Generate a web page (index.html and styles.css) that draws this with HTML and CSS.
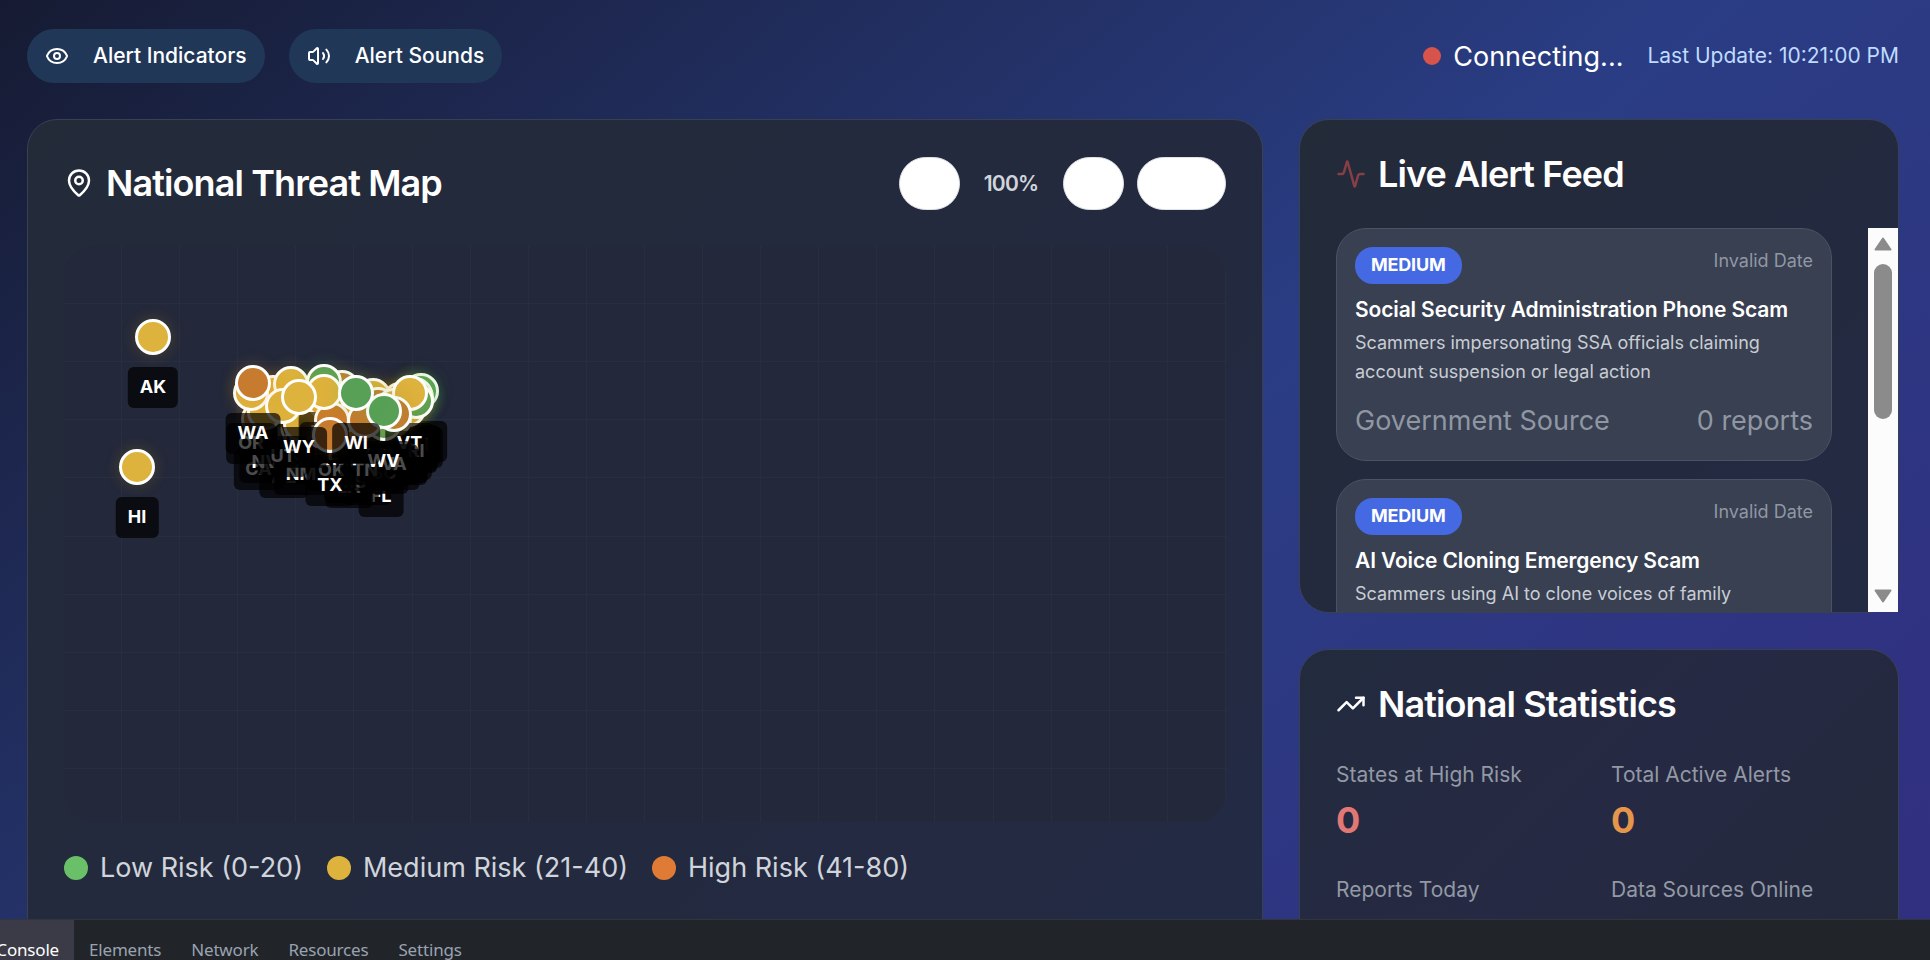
FILE: index.html
```html
<!DOCTYPE html>
<html lang="en">
<head>
<meta charset="utf-8">
<title>National Threat Map</title>
<link rel="stylesheet" href="styles.css">
</head>
<body>
<div class="page">
  <header class="topbar">
    <div class="toggles">
      <button class="toggle"><svg class="icon" viewBox="0 0 24 24"><path d="M2.062 12.348a1 1 0 0 1 0-.696 10.75 10.75 0 0 1 19.876 0 1 1 0 0 1 0 .696 10.75 10.75 0 0 1-19.876 0"/><circle cx="12" cy="12" r="3"/></svg><span>Alert Indicators</span></button>
      <button class="toggle"><svg class="icon" viewBox="0 0 24 24"><path d="M11 4.702a.705.705 0 0 0-1.203-.498L6.413 7.587A1.4 1.4 0 0 1 5.416 8H3a1 1 0 0 0-1 1v6a1 1 0 0 0 1 1h2.416a1.4 1.4 0 0 1 .997.413l3.383 3.384A.705.705 0 0 0 11 19.298z"/><path d="M16 9a5 5 0 0 1 0 6"/><path d="M19.364 18.364a9 9 0 0 0 0-12.728"/></svg><span>Alert Sounds</span></button>
    </div>
    <div class="status">
      <span class="status-dot"></span>
      <span class="status-text">Connecting...</span>
      <span class="status-time">Last Update: 10:21:00 PM</span>
    </div>
  </header>
  <main class="layout">
    <section class="panel map-panel">
      <div class="map-head">
        <h2 class="title"><svg class="icon icon-lg" viewBox="0 0 24 24"><path d="M20 10c0 4.993-5.539 10.193-7.399 11.799a1 1 0 0 1-1.202 0C9.539 20.193 4 14.993 4 10a8 8 0 0 1 16 0"/><circle cx="12" cy="10" r="3"/></svg><span>National Threat Map</span></h2>
        <div class="zoom">
          <button class="zoom-btn"></button>
          <span class="zoom-value">100%</span>
          <button class="zoom-btn"></button>
          <button class="zoom-btn zoom-reset"></button>
        </div>
      </div>
      <div class="map" id="map"></div>
      <div class="legend">
        <span class="legend-item"><i class="swatch low"></i>Low Risk (0-20)</span>
        <span class="legend-item"><i class="swatch medium"></i>Medium Risk (21-40)</span>
        <span class="legend-item"><i class="swatch high"></i>High Risk (41-80)</span>
      </div>
    </section>
    <div class="side">
      <section class="panel feed">
        <h2 class="title"><svg class="icon icon-lg pulse" viewBox="0 0 24 24"><path d="M22 12h-2.48a2 2 0 0 0-1.93 1.46l-2.35 8.36a.25.25 0 0 1-.48 0L9.24 2.18a.25.25 0 0 0-.48 0l-2.35 8.36A2 2 0 0 1 4.49 12H2"/></svg><span>Live Alert Feed</span></h2>
        <div class="feed-body">
          <div class="feed-list">
            <article class="alert">
              <div class="alert-top"><span class="badge">MEDIUM</span><span class="date">Invalid Date</span></div>
              <h3 class="alert-title">Social Security Administration Phone Scam</h3>
              <p class="alert-desc">Scammers impersonating SSA officials claiming account suspension or legal action</p>
              <div class="alert-foot"><span>Government Source</span><span>0 reports</span></div>
            </article>
            <article class="alert">
              <div class="alert-top"><span class="badge">MEDIUM</span><span class="date">Invalid Date</span></div>
              <h3 class="alert-title">AI Voice Cloning Emergency Scam</h3>
              <p class="alert-desc">Scammers using AI to clone voices of family</p>
            </article>
          </div>
          <div class="scrollbar">
            <svg class="arrow" viewBox="0 0 18 14"><path d="M9 1.5 16.5 12.5H1.5z"/></svg>
            <div class="thumb"></div>
            <svg class="arrow arrow-down" viewBox="0 0 18 14"><path d="M9 12.5 1.5 1.5H16.5z"/></svg>
          </div>
        </div>
      </section>
      <section class="panel stats">
        <h2 class="title"><svg class="icon icon-lg" viewBox="0 0 24 24"><path d="M22 7l-8.5 8.5-5-5L2 17"/><path d="M16 7h6v6"/></svg><span>National Statistics</span></h2>
        <div class="stat-grid">
          <div><div class="stat-label">States at High Risk</div><div class="stat-value red">0</div></div>
          <div><div class="stat-label">Total Active Alerts</div><div class="stat-value orange">0</div></div>
          <div><div class="stat-label">Reports Today</div></div>
          <div><div class="stat-label">Data Sources Online</div></div>
        </div>
      </section>
    </div>
  </main>
</div>
<nav class="devbar">
  <span class="tab active">Console</span><span class="tab">Elements</span><span class="tab">Network</span><span class="tab">Resources</span><span class="tab">Settings</span>
</nav>
<script src="map.js"></script>
</body>
</html>
```
FILE: map.js
```javascript
// code, x, y inside the map, risk level
const states = [
  ["AL", 303, 188, "medium"], ["AK", 89, 91, "medium"], ["AZ", 220, 181, "medium"],
  ["AR", 285, 186, "high"], ["CA", 194.5, 173, "high"], ["CO", 236, 167, "medium"],
  ["CT", 349, 156, "medium"], ["DE", 340, 166, "medium"], ["FL", 317, 199.5, "low"],
  ["GA", 312, 176, "medium"], ["HI", 73, 220.5, "medium"], ["ID", 208.5, 147, "medium"],
  ["IL", 294, 164, "medium"], ["IN", 303, 163, "high"], ["IA", 283, 156, "medium"],
  ["KS", 266, 167, "medium"], ["KY", 307, 170, "medium"], ["LA", 285, 191, "high"],
  ["ME", 357, 145, "low"], ["MD", 336, 168, "medium"], ["MA", 352, 151, "low"],
  ["MI", 308.5, 150, "medium"], ["MN", 277.5, 142, "high"], ["MS", 288, 186, "high"],
  ["MO", 284, 168, "medium"], ["MT", 227, 137.5, "medium"], ["NE", 262, 158, "medium"],
  ["NV", 201, 166, "medium"], ["NH", 351, 149, "low"], ["NJ", 344, 163, "medium"],
  ["NM", 237, 177.5, "medium"], ["NY", 336, 154, "medium"], ["NC", 330, 173, "medium"],
  ["ND", 259.5, 136, "low"], ["OH", 314, 159, "high"], ["OK", 267.5, 174, "high"],
  ["OR", 187, 147, "medium"], ["PA", 330, 160, "medium"], ["RI", 352, 154.5, "low"],
  ["SC", 320, 176.5, "low"], ["SD", 260, 146, "medium"], ["TN", 301, 174, "high"],
  ["TX", 266, 188.7, "high"], ["UT", 219, 160, "medium"], ["VT", 345.5, 146.5, "medium"],
  ["VA", 330, 167.5, "high"], ["WA", 189, 137, "high"], ["WV", 319.7, 165, "low"],
  ["WI", 292, 147, "low"], ["WY", 235, 150.7, "medium"]
];
const map = document.getElementById("map");
for (const [code, x, y, level] of states) {
  const marker = document.createElement("div");
  marker.className = "marker";
  marker.style.left = x + "px";
  marker.style.top = y + "px";
  marker.innerHTML = `<div class="pin ${level}"></div><div class="pin-label">${code}</div>`;
  map.appendChild(marker);
}
```
FILE: styles.css
```css
* { box-sizing: border-box; }
body {
  margin: 0;
  height: 960px;
  overflow: hidden;
  display: flex;
  flex-direction: column;
  font-family: Inter, "Liberation Sans", sans-serif;
  font-size: 27px;
  line-height: 36px;
  color: #fff;
  background: #212529;
}
h2, h3, p { margin: 0; }
button { border: 0; font: inherit; color: inherit; padding: 0; }
.page {
  height: 919px;
  flex: none;
  overflow: hidden;
  padding: 29px 31px 0 27px;
  background: linear-gradient(140deg, #161b32 0, #2a3d84 1080px, #312f80 1900px);
}
.topbar { display: flex; justify-content: space-between; height: 54px; align-items: center; }
.toggles { display: flex; gap: 24px; }
.toggle {
  height: 54px;
  border-radius: 27px;
  padding: 0 18px;
  display: flex;
  align-items: center;
  gap: 24px;
  font-size: 21px;
  font-weight: 500;
  background: #213757;
}
.icon {
  width: 24px;
  height: 24px;
  flex: none;
  fill: none;
  stroke: currentColor;
  stroke-width: 2;
  stroke-linecap: round;
  stroke-linejoin: round;
}
.icon-lg { width: 30px; height: 30px; }
.pulse { color: #863f46; }
.status { display: flex; align-items: center; }
.status-dot { width: 18px; height: 18px; border-radius: 50%; background: #d6544b; margin-right: 12px; }
.status-text { margin-right: 24px; padding-top: 2px; }
.status-time { font-size: 21px; color: #bfdbfe; }
.layout { display: grid; grid-template-columns: 1236px 600px; gap: 36px; margin-top: 36px; }
.panel { border: 1px solid #384152; border-radius: 30px; background: linear-gradient(135deg, #232a38, #232a44); }
.map-panel { height: 860px; padding: 36px; }
.map-head { display: flex; justify-content: space-between; align-items: center; height: 54px; padding-right: .5px; }
.title { display: flex; align-items: center; gap: 12px; font-size: 36px; line-height: 40px; font-weight: 600; letter-spacing: -0.9px; }
.zoom { display: flex; align-items: center; }
.zoom-btn { width: 61px; height: 53px; border-radius: 27px; background: #fff; border: 1px solid #dfe2e8; }
.zoom-value { width: 103px; padding-top: 2px; text-align: center; font-size: 21px; font-weight: 600; letter-spacing: -0.8px; color: #d1d5db; }
.zoom-reset { width: 89px; margin-left: 13px; }
.map {
  position: relative;
  height: 576px;
  margin-top: 36px;
  border-radius: 30px;
  overflow: hidden;
  background:
    repeating-linear-gradient(90deg, transparent 0 57.1px, rgba(55, 70, 90, .2) 57.1px 58.1px),
    repeating-linear-gradient(180deg, transparent 0 57.1px, rgba(55, 70, 90, .2) 57.1px 58.1px),
    #23283a;
}
.marker { position: absolute; width: 0; height: 0; }
.pin { position: absolute; left: -18px; top: -18px; width: 36px; height: 36px; border-radius: 50%; border: 3px solid #fff; }
.pin.low { background: #57a055; box-shadow: 0 0 15px rgba(87, 190, 85, .25); }
.pin.medium { background: #ddb23d; box-shadow: 0 0 15px rgba(234, 179, 8, .2); }
.pin.high { background: #c77b2e; box-shadow: 0 0 15px rgba(234, 140, 40, .25); }
.pin-label {
  position: absolute;
  top: 30px;
  left: 0;
  transform: translateX(-50%);
  height: 41px;
  padding: 0 12px;
  border-radius: 6px;
  font-size: 18px;
  line-height: 40px;
  font-weight: 700;
  background: rgba(0, 0, 0, .7);
}
.legend { display: flex; gap: 24px; margin-top: 28px; color: #d1d5db; }
.legend-item { display: flex; align-items: center; gap: 12px; }
.swatch { width: 24px; height: 24px; border-radius: 50%; }
.swatch.low { background: #6abf69; }
.swatch.medium { background: #ddb23d; }
.swatch.high { background: #e07b35; }
.side { display: flex; flex-direction: column; gap: 36px; }
.feed { height: 494px; padding-top: 34px; }
.feed .title, .stats .title { padding-left: 36px; }
.feed-body { display: flex; justify-content: space-between; height: 384px; margin-top: 34px; overflow: hidden; }
.feed-list { width: 496px; margin-left: 36px; display: flex; flex-direction: column; gap: 18px; overflow: hidden; }
.alert { flex: none; height: 233px; border: 1px solid #4a5263; border-radius: 30px; background: #384052; padding: 18px; }
.alert-top { display: flex; justify-content: space-between; height: 37px; font-size: 18px; }
.badge { height: 37px; line-height: 36px; padding: 0 16px; border-radius: 18px; background: #4569e2; font-weight: 700; letter-spacing: -0.2px; }
.date { line-height: 28px; color: #9097a3; }
.alert-title { margin-top: 10px; font-size: 21px; line-height: 32px; font-weight: 600; letter-spacing: -0.13px; }
.alert-desc { margin-top: 2px; font-size: 18px; line-height: 29px; color: #c9cdd4; }
.alert-foot { display: flex; justify-content: space-between; margin-top: 17px; color: #9097a3; }
.scrollbar { width: 30px; background: #fcfcfc; display: flex; flex-direction: column; align-items: center; padding: 9px 0; }
.arrow { width: 18px; height: 14px; fill: #8b8b8b; stroke: #8b8b8b; stroke-width: 2; stroke-linejoin: round; }
.thumb { width: 18px; height: 155px; margin-top: 13px; border-radius: 9px; background: #8b8b8b; }
.arrow-down { margin-top: auto; }
.stats { height: 330px; padding-top: 34px; background: linear-gradient(135deg, #222b3e, #262943 50%, #23293a); }
.stat-grid { display: grid; grid-template-columns: 275px 1fr; row-gap: 35px; padding-left: 36px; margin-top: 36px; }
.stat-label { font-size: 21px; line-height: 30px; color: #9299a5; }
.stat-value { font-size: 36px; line-height: 40px; font-weight: 700; margin-top: 10px; }
.red { color: #e27876; }
.orange { color: #e5964b; }
.devbar { flex: none; height: 41px; border-top: 1px solid #32363c; display: flex; overflow: hidden; background: #212529; font-family: "Noto Sans", sans-serif; font-size: 17px; letter-spacing: -0.18px; color: #9aa2b1; }
.tab { padding: 12px 15px 0; line-height: 36px; flex: none; }
.tab.active { width: 74px; padding: 12px 15px 0 0; display: flex; justify-content: flex-end; background: #3a3b46; color: #fff; }
```
